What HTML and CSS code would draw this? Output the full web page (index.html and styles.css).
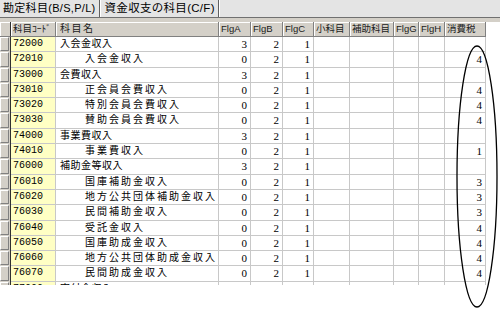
FILE: index.html
```html
<!DOCTYPE html>
<html lang="ja">

<head>
  <meta charset="UTF-8">
  <meta name="viewport" content="width=device-width, initial-scale=1.0">
  <title>科目一覧</title>
  <link rel="stylesheet" href="styles.css">
</head>

<body>
  <div class="tabs">
    <div class="tab active">勘定科目(B/S,P/L)</div>
    <div class="tab">資金収支の科目(C/F)</div>
  </div>
  <div class="band"></div>
  <div class="grid">
    <div class="row head">
      <div class="sel"></div>
      <div class="h">科目ｺｰﾄﾞ</div>
      <div class="h wide">科目名</div>
      <div class="h">FlgA</div>
      <div class="h">FlgB</div>
      <div class="h">FlgC</div>
      <div class="h">小科目</div>
      <div class="h">補助科目</div>
      <div class="h">FlgG</div>
      <div class="h">FlgH</div>
      <div class="h">消費税</div>
      <div class="fill"></div>
    </div>

    <div class="row">
      <div class="sel"><span></span></div>
      <div class="code">72000</div>
      <div class="name">入会金収入</div>
      <div class="num">3</div><div class="num">2</div><div class="num">1</div>
      <div class="c"></div><div class="c"></div><div class="c"></div><div class="c"></div>
      <div class="num"></div>
      <div class="fill"></div>
    </div>
    <div class="row">
      <div class="sel"><span></span></div>
      <div class="code">72010</div>
      <div class="name sub">入会金収入</div>
      <div class="num">0</div><div class="num">2</div><div class="num">1</div>
      <div class="c"></div><div class="c"></div><div class="c"></div><div class="c"></div>
      <div class="num">4</div>
      <div class="fill"></div>
    </div>
    <div class="row">
      <div class="sel"><span></span></div>
      <div class="code">73000</div>
      <div class="name">会費収入</div>
      <div class="num">3</div><div class="num">2</div><div class="num">1</div>
      <div class="c"></div><div class="c"></div><div class="c"></div><div class="c"></div>
      <div class="num"></div>
      <div class="fill"></div>
    </div>
    <div class="row">
      <div class="sel"><span></span></div>
      <div class="code">73010</div>
      <div class="name sub">正会員会費収入</div>
      <div class="num">0</div><div class="num">2</div><div class="num">1</div>
      <div class="c"></div><div class="c"></div><div class="c"></div><div class="c"></div>
      <div class="num">4</div>
      <div class="fill"></div>
    </div>
    <div class="row">
      <div class="sel"><span></span></div>
      <div class="code">73020</div>
      <div class="name sub">特別会員会費収入</div>
      <div class="num">0</div><div class="num">2</div><div class="num">1</div>
      <div class="c"></div><div class="c"></div><div class="c"></div><div class="c"></div>
      <div class="num">4</div>
      <div class="fill"></div>
    </div>
    <div class="row">
      <div class="sel"><span></span></div>
      <div class="code">73030</div>
      <div class="name sub">賛助会員会費収入</div>
      <div class="num">0</div><div class="num">2</div><div class="num">1</div>
      <div class="c"></div><div class="c"></div><div class="c"></div><div class="c"></div>
      <div class="num">4</div>
      <div class="fill"></div>
    </div>
    <div class="row">
      <div class="sel"><span></span></div>
      <div class="code">74000</div>
      <div class="name">事業費収入</div>
      <div class="num">3</div><div class="num">2</div><div class="num">1</div>
      <div class="c"></div><div class="c"></div><div class="c"></div><div class="c"></div>
      <div class="num"></div>
      <div class="fill"></div>
    </div>
    <div class="row">
      <div class="sel"><span></span></div>
      <div class="code">74010</div>
      <div class="name sub">事業費収入</div>
      <div class="num">0</div><div class="num">2</div><div class="num">1</div>
      <div class="c"></div><div class="c"></div><div class="c"></div><div class="c"></div>
      <div class="num">1</div>
      <div class="fill"></div>
    </div>
    <div class="row">
      <div class="sel"><span></span></div>
      <div class="code">76000</div>
      <div class="name">補助金等収入</div>
      <div class="num">3</div><div class="num">2</div><div class="num">1</div>
      <div class="c"></div><div class="c"></div><div class="c"></div><div class="c"></div>
      <div class="num"></div>
      <div class="fill"></div>
    </div>
    <div class="row">
      <div class="sel"><span></span></div>
      <div class="code">76010</div>
      <div class="name sub">国庫補助金収入</div>
      <div class="num">0</div><div class="num">2</div><div class="num">1</div>
      <div class="c"></div><div class="c"></div><div class="c"></div><div class="c"></div>
      <div class="num">3</div>
      <div class="fill"></div>
    </div>
    <div class="row">
      <div class="sel"><span></span></div>
      <div class="code">76020</div>
      <div class="name sub">地方公共団体補助金収入</div>
      <div class="num">0</div><div class="num">2</div><div class="num">1</div>
      <div class="c"></div><div class="c"></div><div class="c"></div><div class="c"></div>
      <div class="num">3</div>
      <div class="fill"></div>
    </div>
    <div class="row">
      <div class="sel"><span></span></div>
      <div class="code">76030</div>
      <div class="name sub">民間補助金収入</div>
      <div class="num">0</div><div class="num">2</div><div class="num">1</div>
      <div class="c"></div><div class="c"></div><div class="c"></div><div class="c"></div>
      <div class="num">3</div>
      <div class="fill"></div>
    </div>
    <div class="row">
      <div class="sel"><span></span></div>
      <div class="code">76040</div>
      <div class="name sub">受託金収入</div>
      <div class="num">0</div><div class="num">2</div><div class="num">1</div>
      <div class="c"></div><div class="c"></div><div class="c"></div><div class="c"></div>
      <div class="num">4</div>
      <div class="fill"></div>
    </div>
    <div class="row">
      <div class="sel"><span></span></div>
      <div class="code">76050</div>
      <div class="name sub">国庫助成金収入</div>
      <div class="num">0</div><div class="num">2</div><div class="num">1</div>
      <div class="c"></div><div class="c"></div><div class="c"></div><div class="c"></div>
      <div class="num">4</div>
      <div class="fill"></div>
    </div>
    <div class="row">
      <div class="sel"><span></span></div>
      <div class="code">76060</div>
      <div class="name sub">地方公共団体助成金収入</div>
      <div class="num">0</div><div class="num">2</div><div class="num">1</div>
      <div class="c"></div><div class="c"></div><div class="c"></div><div class="c"></div>
      <div class="num">4</div>
      <div class="fill"></div>
    </div>
    <div class="row">
      <div class="sel"><span></span></div>
      <div class="code">76070</div>
      <div class="name sub">民間助成金収入</div>
      <div class="num">0</div><div class="num">2</div><div class="num">1</div>
      <div class="c"></div><div class="c"></div><div class="c"></div><div class="c"></div>
      <div class="num">4</div>
      <div class="fill"></div>
    </div>
    <div class="row">
      <div class="sel"><span></span></div>
      <div class="code">77000</div>
      <div class="name">寄付金収入</div>
      <div class="num">3</div><div class="num">2</div><div class="num">1</div>
      <div class="c"></div><div class="c"></div><div class="c"></div><div class="c"></div>
      <div class="num"></div>
      <div class="fill"></div>
    </div>
  </div>

  <!-- 消費税の列を囲む手書きの丸 -->
  <svg class="mark" width="500" height="309" viewBox="0 0 500 309">
    <ellipse cx="477" cy="176.5" rx="20" ry="130.5" fill="none" stroke="#000" stroke-width="1.3" />
  </svg>
</body>

</html>
```

FILE: styles.css
```css
body {
  margin: 0;
  width: 500px;
  height: 309px;
  overflow: hidden;
  background: #fff;
  font-family: "Liberation Sans", "Noto Sans CJK JP", sans-serif;
  color: #000;
  position: relative;
}

/* タブ */
.tabs {
  height: 18px;
  display: flex;
  background: #e4e4e4;
  border-bottom: 1px solid #707070;
  box-sizing: border-box;
}

.tab {
  font-size: 11px;
  line-height: 17px;
  padding: 0 3px 0 3px;
  letter-spacing: 0.3px;
  border-right: 1px solid #606060;
  box-shadow: 1px 0 0 #fff;
  white-space: nowrap;
}

.tab + .tab {
  margin-left: 1px;
  padding-left: 4px;
  font-size: 11.5px;
}

.band {
  height: 4px;
  background: #d4d0c8;
}

/* 一覧 */
.grid {
  height: 263px;
  overflow: hidden;
}

.row {
  display: grid;
  grid-template-columns: 11px 45px 163px 32px 32px 31px 36px 44px 25px 26px 41px 1fr;
  height: 15.3px;
}

.row > div {
  box-sizing: border-box;
  border-right: 1px solid #c8c8c8;
  border-bottom: 1px solid #c8c8c8;
  white-space: nowrap;
  overflow: hidden;
}

.row > .fill {
  border: 0;
  background: #fff;
}

.row > .sel {
  background: #d4d0c8;
  border-right: 1px solid #303030;
  border-bottom: 0;
  padding: 0 1px 1px 0;
}

.sel span {
  display: block;
  height: 100%;
  box-sizing: border-box;
  border-top: 1px solid #fff;
  border-left: 1px solid #fff;
  border-bottom: 1px solid #808080;
  border-right: 1px solid #808080;
}

/* 見出し */
.head {
  height: 15px;
}

.head > .h {
  background: #d4d0c8;
  border-right: 1px solid #808080;
  border-bottom: 1px solid #808080;
  box-shadow: inset 1px 1px 0 #fff;
  font-size: 9.5px;
  line-height: 14px;
  padding-left: 2px;
  color: #202020;
}

.head > .wide {
  letter-spacing: 1.5px;
  padding-left: 4px;
  font-size: 10px;
}

.head > .sel {
  border-bottom: 1px solid #808080;
  box-shadow: inset 1px 1px 0 #fff;
}

/* セル */
.code {
  background: #ffffc4;
  font-family: "Liberation Mono", monospace;
  font-size: 10px;
  line-height: 14px;
  padding-left: 2px;
}

.name {
  font-size: 10px;
  line-height: 14px;
  padding-left: 4px;
  letter-spacing: 0.5px;
}

.name.sub {
  padding-left: 29px;
  letter-spacing: 2px;
}

.num {
  font-family: "Liberation Serif", serif;
  font-size: 11px;
  line-height: 14px;
  text-align: right;
  padding-right: 3px;
}

.mark {
  position: absolute;
  left: 0;
  top: 0;
  pointer-events: none;
}
```
